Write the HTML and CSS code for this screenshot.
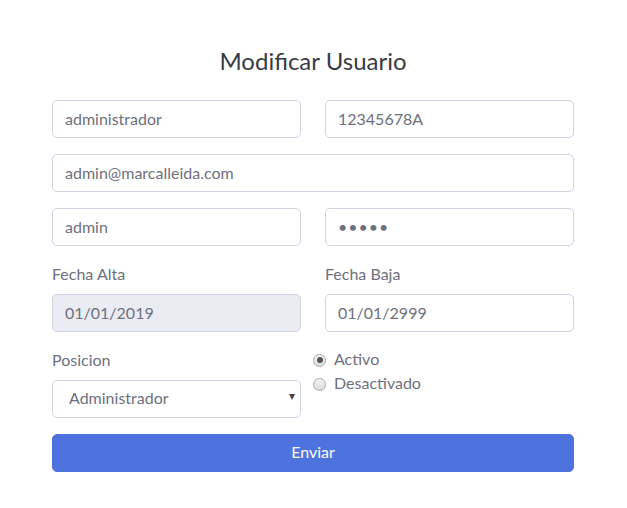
FILE: index.html
```html
<!DOCTYPE html>
<html lang="es">
<head>
<meta charset="utf-8">
<title>Modificar Usuario</title>
<link rel="stylesheet" href="styles.css">
</head>
<body>
<div class="container">
  <h4 class="title">Modificar Usuario</h4>
  <form class="form">
    <div class="row">
      <input class="control" type="text" value="administrador">
      <input class="control" type="text" value="12345678A">
    </div>
    <div class="row single">
      <input class="control" type="email" value="admin@marcalleida.com">
    </div>
    <div class="row">
      <input class="control" type="text" value="admin">
      <input class="control" type="password" value="admin">
    </div>
    <div class="row">
      <div class="group">
        <label class="label">Fecha Alta</label>
        <input class="control" type="text" value="01/01/2019" disabled>
      </div>
      <div class="group">
        <label class="label">Fecha Baja</label>
        <input class="control" type="text" value="01/01/2999">
      </div>
    </div>
    <div class="row">
      <div class="group">
        <label class="label">Posicion</label>
        <div class="select-wrap">
          <select class="control select">
            <option>Administrador</option>
          </select>
          <span class="arrow">▾</span>
        </div>
      </div>
      <div class="radios">
        <label class="check"><input type="radio" name="estado" checked><span>Activo</span></label>
        <label class="check"><input type="radio" name="estado"><span>Desactivado</span></label>
      </div>
    </div>
    <button type="button" class="btn">Enviar</button>
  </form>
</div>
</body>
</html>
```
FILE: styles.css
```css
* { box-sizing: border-box; }
html, body { margin: 0; padding: 0; background: #fff; }
body {
  font-family: Lato, "Open Sans", "Liberation Sans", sans-serif;
  font-size: 16px;
  line-height: 1.5;
  color: #6e707e;
  padding: 0 53px 0 52px;
}
.container {
  width: 522px;
  padding-top: 46px;
}
.title {
  margin: 0 0 25px;
  text-align: center;
  font-size: 24px;
  font-weight: 400;
  line-height: 29px;
  color: #3a3b45;
}
.row {
  display: grid;
  grid-template-columns: 249px 249px;
  column-gap: 24px;
  margin-bottom: 16px;
}
.row.single { grid-template-columns: 1fr; }
.group { display: flex; flex-direction: column; }
.label { display: block; margin-bottom: 8px; line-height: 23px; padding-bottom: 1px; }
.control {
  display: block;
  width: 100%;
  height: 38px;
  padding: 5px 12px 7px;
  font-family: inherit;
  font-size: 16px;
  line-height: 24px;
  color: #6e707e;
  background: #fff;
  border: 1px solid #d1d3e2;
  border-radius: 5px;
  outline: none;
}
.control[type="password"] { letter-spacing: 1px; }
.control:disabled { background: #eaecf4; color: #6e707e; opacity: 1; }
.select-wrap { position: relative; }
.select {
  appearance: none;
  -webkit-appearance: none;
  padding-left: 16px;
}
.arrow {
  position: absolute;
  right: 6px;
  top: 7px;
  font-size: 12px;
  color: #444;
  pointer-events: none;
}
.radios {
  display: flex;
  flex-direction: column;
  margin-left: -12px;
}
.check { display: flex; align-items: center; line-height: 24px; }
.check span { position: relative; top: -1px; }
.check input {
  appearance: none;
  -webkit-appearance: none;
  width: 13px;
  height: 13px;
  margin: 0 8px 0 0;
  border: 1px solid #a8a8a8;
  border-radius: 50%;
  background: linear-gradient(#f4f4f4, #dcdcdc);
  position: relative;
}
.check input:checked::after {
  content: "";
  position: absolute;
  left: 2.5px;
  top: 2.5px;
  width: 6px;
  height: 6px;
  border-radius: 50%;
  background: #555;
}
.btn {
  display: block;
  width: 100%;
  height: 38px;
  padding: 5px 12px 7px;
  border: 1px solid #4e73df;
  border-radius: 5px;
  background: #4e73df;
  color: #fff;
  font-family: inherit;
  font-size: 16px;
  line-height: 24px;
  cursor: pointer;
}
```
